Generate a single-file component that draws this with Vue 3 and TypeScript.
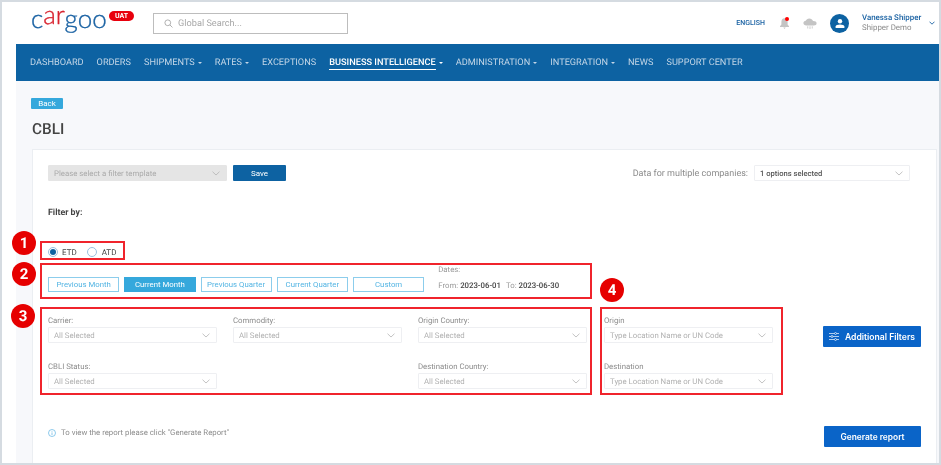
<template>
  <div class="page">
    <header class="topbar">
      <div class="logo-wrap">
        <svg class="logo" width="80" height="40" viewBox="0 0 80 40">
          <text x="0" y="26"><tspan class="logo-blue">c</tspan><tspan class="logo-red" dy="-4">ar</tspan><tspan class="logo-blue" dy="4">goo</tspan></text>
        </svg>
        <span class="uat">UAT</span>
      </div>
      <div class="search">
        <svg width="9" height="9" viewBox="0 0 10 10" fill="none" stroke="#a8a8a8" stroke-width="1">
          <circle cx="4.2" cy="4.2" r="3.2" />
          <path d="M6.6 6.6 9.4 9.4" />
        </svg>
        <span>Global Search...</span>
      </div>
      <div class="top-right">
        <span class="lang">ENGLISH</span>
        <span class="bell">
          <svg width="11" height="12" viewBox="0 0 11 12" fill="#c4c4c4">
            <path d="M5.5 1.2C3.4 1.2 2.4 2.8 2.4 4.8V7.4L1 9.2V10H10V9.2L8.6 7.4V4.8C8.6 2.8 7.6 1.2 5.5 1.2Z" />
            <path d="M4.3 10.6H6.7L5.5 12Z" />
          </svg>
          <i class="bell-dot"></i>
        </span>
        <svg class="cloud" width="14" height="11" viewBox="0 0 14 11" fill="#c4c4c4">
          <path d="M3.4 7.6C1.6 7.6.4 6.5.4 5.1.4 3.8 1.4 2.9 2.7 2.8 3.3 1.3 4.6.4 6.2.4 8 .4 9.5 1.5 10 3.1 12 3 13.6 3.9 13.6 5.3 13.6 6.6 12.5 7.6 10.8 7.6Z" />
          <path d="M4.4 8.2H5.2V10.4H4.4ZM6.6 8.2H7.4V11H6.6ZM8.8 8.2H9.6V10.4H8.8Z" />
        </svg>
        <span class="avatar">
          <svg width="10" height="9" viewBox="0 0 10 9" fill="#fff">
            <circle cx="5" cy="2.2" r="2.2" />
            <path d="M0.6 9V7.6C0.6 6.2 2.6 5.4 5 5.4 7.4 5.4 9.4 6.2 9.4 7.6V9Z" />
          </svg>
        </span>
        <div class="user">
          <div class="user-name">Vanessa Shipper</div>
          <div class="user-role">Shipper Demo</div>
        </div>
        <svg class="user-chev" width="6" height="4" viewBox="0 0 6 4" fill="none" stroke="#1a62a3" stroke-width="0.9">
          <path d="M.5.7 3 3.2 5.5.7" />
        </svg>
      </div>
    </header>

    <div class="body">
      <nav class="nav">
        <span v-for="item in navItems" :key="item.label" class="nav-item" :class="{ active: item.active }">
          <span class="nav-label">{{ item.label }}</span>
          <i v-if="item.caret" class="caret"></i>
        </span>
      </nav>

      <main class="content">
        <button class="back">Back</button>
        <h1 class="title">CBLI</h1>

        <section class="card">
          <div class="template-row">
            <div class="select template">
              <span>Please select a filter template</span>
              <svg class="chev" width="8" height="5" viewBox="0 0 8 5" fill="none" stroke="#b5b5b5" stroke-width="0.8"><path d="M.5.7 4 4 7.5.7" /></svg>
            </div>
            <button class="save">Save</button>
            <label class="companies-label">Data for multiple companies:</label>
            <div class="select companies">
              <span>1 options selected</span>
              <svg class="chev" width="8" height="5" viewBox="0 0 8 5" fill="none" stroke="#b5b5b5" stroke-width="0.8"><path d="M.5.7 4 4 7.5.7" /></svg>
            </div>
          </div>

          <div class="filter-by">Filter by:</div>

          <div class="box radios">
            <span class="radio on"><i></i></span><span class="radio-label">ETD</span>
            <span class="radio"></span><span class="radio-label">ATD</span>
          </div>

          <div class="box periods">
            <button v-for="p in periods" :key="p" class="period" :class="{ current: p === 'Current Month' }">{{ p }}</button>
            <div class="dates">
              <div class="dates-label">Dates:</div>
              <div class="dates-values">
                <span>From: <b>2023-06-01</b></span>
                <span>To: <b>2023-06-30</b></span>
              </div>
            </div>
          </div>

          <div class="filters-row">
            <div class="box grid-main">
              <div v-for="f in mainFilters" :key="f.label" class="field" :style="{ gridColumn: f.col }">
                <label>{{ f.label }}</label>
                <div class="select">
                  <span>All Selected</span>
                  <svg class="chev" width="8" height="5" viewBox="0 0 8 5" fill="none" stroke="#b5b5b5" stroke-width="0.8"><path d="M.5.7 4 4 7.5.7" /></svg>
                </div>
              </div>
            </div>
            <div class="box grid-side">
              <div v-for="f in ['Origin', 'Destination']" :key="f" class="field">
                <label>{{ f }}</label>
                <div class="select">
                  <span>Type Location Name or UN Code</span>
                  <svg class="chev" width="8" height="5" viewBox="0 0 8 5" fill="none" stroke="#b5b5b5" stroke-width="0.8"><path d="M.5.7 4 4 7.5.7" /></svg>
                </div>
              </div>
            </div>
            <button class="primary additional">
              <svg width="10" height="9" viewBox="0 0 10 9" fill="none" stroke="#dbe8f8" stroke-width="0.8">
                <path d="M0 1.5H10M0 4.5H10M0 7.5H10" />
                <circle cx="6.5" cy="1.5" r="1" fill="#0a64c8" />
                <circle cx="3" cy="4.5" r="1" fill="#0a64c8" />
                <circle cx="6.5" cy="7.5" r="1" fill="#0a64c8" />
              </svg>
              Additional Filters
            </button>
          </div>

          <div class="footer-row">
            <svg class="info" width="8" height="8" viewBox="0 0 8 8" fill="none" stroke="#5db3e3" stroke-width="0.7">
              <circle cx="4" cy="4" r="3.5" />
              <path d="M4 3.4V6M4 2V2.7" />
            </svg>
            <span class="hint">To view the report please click "Generate Report"</span>
            <button class="primary generate">Generate report</button>
          </div>

          <span class="marker m1">1</span>
          <span class="marker m2">2</span>
          <span class="marker m3">3</span>
          <span class="marker m4">4</span>
        </section>
      </main>
    </div>
  </div>
</template>

<script setup lang="ts">
interface NavItem {
  label: string
  caret?: boolean
  active?: boolean
}

const navItems: NavItem[] = [
  { label: 'DASHBOARD' },
  { label: 'ORDERS' },
  { label: 'SHIPMENTS', caret: true },
  { label: 'RATES', caret: true },
  { label: 'EXCEPTIONS' },
  { label: 'BUSINESS INTELLIGENCE', caret: true, active: true },
  { label: 'ADMINISTRATION', caret: true },
  { label: 'INTEGRATION', caret: true },
  { label: 'NEWS' },
  { label: 'SUPPORT CENTER' }
]

const periods = ['Previous Month', 'Current Month', 'Previous Quarter', 'Current Quarter', 'Custom']

const mainFilters = [
  { label: 'Carrier:', col: '1' },
  { label: 'Commodity:', col: '2' },
  { label: 'Origin Country:', col: '3' },
  { label: 'CBLI Status:', col: '1' },
  { label: 'Destination Country:', col: '3' }
]
</script>

<style>
html,
body {
  margin: 0;
  background: #fff;
}
</style>

<style scoped>
.page {
  box-sizing: border-box;
  width: 941px;
  height: 465px;
  overflow: hidden;
  display: flex;
  flex-direction: column;
  border: 2px solid #d5dbe1;
  background: #fff;
  font-family: Roboto, "Liberation Sans", sans-serif;
  color: #777;
  text-rendering: geometricPrecision;
  filter: blur(0.4px);
}

/* top bar */
.topbar {
  height: 42px;
  flex: none;
  display: flex;
  align-items: center;
  padding-left: 29px;
}

.logo-wrap {
  width: 122px;
  height: 42px;
  position: relative;
  flex: none;
}

.logo {
  position: absolute;
  left: 0;
  top: 0;
}

.logo text {
  font-family: Lato, sans-serif;
  font-weight: 300;
  font-size: 26px;
  stroke-width: 0.35px;
}

.logo-blue {
  fill: #1a62a3;
  stroke: #1a62a3;
}

.logo-red {
  fill: #d8232f;
  stroke: #d8232f;
}

.uat {
  position: absolute;
  left: 78px;
  top: 9px;
  width: 25px;
  height: 10px;
  border-radius: 5px;
  background: #e8000d;
  color: #fff;
  font-size: 7px;
  font-weight: 700;
  line-height: 10px;
  text-align: center;
}

.search {
  box-sizing: border-box;
  width: 195px;
  height: 21px;
  display: flex;
  align-items: center;
  gap: 5px;
  padding-left: 10px;
  border: 1px solid #bdbdbd;
  color: #a8a8a8;
  font-size: 9.2px;
}

.top-right {
  margin-left: auto;
  display: flex;
  align-items: center;
  padding-right: 4px;
}

.lang {
  color: #1a62a3;
  font-size: 7px;
  font-weight: 500;
  margin-right: 14px;
}

.bell {
  position: relative;
  display: flex;
  margin-right: 13px;
}

.bell-dot {
  position: absolute;
  right: 1px;
  top: 0;
  width: 4px;
  height: 4px;
  border-radius: 50%;
  background: #f00;
}

.cloud {
  margin-right: 13px;
}

.avatar {
  width: 19px;
  height: 19px;
  border-radius: 50%;
  background: #0d62a2;
  display: flex;
  align-items: center;
  justify-content: center;
  margin-right: 13px;
}

.user {
  line-height: 10px;
  font-size: 7.9px;
  width: 67px;
}

.user-name {
  color: #1a62a3;
  font-weight: 500;
}

.user-role {
  color: #8a8a8a;
}

/* nav */
.body {
  flex: 1;
  min-height: 0;
  margin-left: 14px;
  display: flex;
  flex-direction: column;
}

.nav {
  height: 37px;
  flex: none;
  display: flex;
  align-items: center;
  gap: 13px;
  padding-left: 14px;
  background: #0d62a2;
  color: #c3d6e7;
  font-size: 9.2px;
}

.nav-item {
  display: flex;
  align-items: center;
  gap: 3px;
}

.nav-item.active {
  color: #fff;
  font-weight: 500;
}

.nav-item.active .nav-label {
  border-bottom: 1px solid #fff;
  padding-bottom: 1px;
  margin-top: 2px;
}

.caret {
  width: 0;
  height: 0;
  border-left: 2.5px solid transparent;
  border-right: 2.5px solid transparent;
  border-top: 2.5px solid currentColor;
}

/* content */
.content {
  flex: 1;
  min-height: 0;
  display: flex;
  flex-direction: column;
  align-items: flex-start;
  padding: 17px 2px 0 15px;
  background: #f7f8fb;
}

.back {
  width: 32px;
  height: 11px;
  padding: 0;
  border: 0;
  border-radius: 1px;
  background: #35a8dc;
  color: #fff;
  font: 8px/11px Roboto, sans-serif;
}

.title {
  margin: 11px 0 0 1px;
  height: 29px;
  color: #444;
  font-size: 15.3px;
  font-weight: 500;
  line-height: 19px;
}

.card {
  position: relative;
  box-sizing: border-box;
  flex: 1;
  align-self: stretch;
  margin-left: 1px;
  padding: 15px 0 0 7px;
  background: #fff;
  border: 1px solid #ebeef2;
  border-bottom: 0;
}

.template-row {
  display: flex;
  align-items: center;
  padding-left: 8px;
}

.select {
  box-sizing: border-box;
  height: 16px;
  display: flex;
  align-items: center;
  justify-content: space-between;
  padding: 1px 6px 0 5px;
  border: 1px solid #eeeff2;
  border-radius: 1px;
  background: #fff;
  color: #b0b0b0;
  font-size: 7.8px;
}

.template {
  width: 179px;
  background: #e5e5e5;
  border-color: #e5e5e5;
  color: #aaa;
}

.save {
  width: 53px;
  height: 16px;
  margin-left: 6px;
  padding: 0;
  border: 0;
  border-radius: 1px;
  background: #0d62a2;
  color: #fff;
  font: 8px Roboto, sans-serif;
}

.companies-label {
  margin-left: auto;
  margin-right: 6px;
  padding-top: 1px;
  color: #8c8c8c;
  font-size: 9px;
}

.companies {
  width: 156px;
  margin-right: 26px;
  color: #555;
  font-size: 7.6px;
  font-weight: 500;
}

.filter-by {
  margin: 27px 0 0 8px;
  height: 11px;
  color: #444;
  font-size: 8.8px;
  font-weight: 700;
  line-height: 11px;
}

.box {
  box-sizing: border-box;
  border: 2px solid #f0242c;
}

.radios {
  display: inline-flex;
  align-items: center;
  width: 85px;
  height: 19px;
  margin-top: 22px;
  padding: 3px 0 0 6px;
  vertical-align: top;
}

.radio {
  box-sizing: border-box;
  flex: none;
  width: 10px;
  height: 10px;
  display: flex;
  align-items: center;
  justify-content: center;
  border: 1px solid #9cc0de;
  border-radius: 50%;
}

.radio.on i {
  width: 6px;
  height: 6px;
  border-radius: 50%;
  background: #0d62a2;
}

.radio-label {
  flex: none;
  margin: 0 10px 0 4px;
  color: #444;
  font-size: 8px;
}

.radio-label:last-child {
  margin: 0 0 0 5px;
}

.periods {
  display: flex;
  align-items: flex-end;
  gap: 5px;
  width: 552px;
  height: 36px;
  margin-top: 3px;
  padding: 0 0 5px 6px;
}

.period {
  width: 71.25px;
  height: 15px;
  padding: 0;
  border: 1px solid #8ccdec;
  background: #fff;
  color: #52b4e3;
  font: 7.8px Roboto, sans-serif;
}

.period.current {
  border-color: #35a8dc;
  background: #35a8dc;
  color: #fff;
}

.dates {
  margin-left: 9px;
  font-size: 7.8px;
  color: #999;
}

.dates-label {
  margin-bottom: 7px;
}

.dates-values {
  display: flex;
  gap: 5px;
  height: 11px;
}

.dates-values b {
  color: #444;
  font-weight: 500;
}

.filters-row {
  display: flex;
  align-items: flex-start;
  margin-top: 8px;
}

.grid-main {
  display: grid;
  grid-template-columns: repeat(3, 169px);
  align-content: start;
  column-gap: 16px;
  row-gap: 17px;
  width: 552px;
  height: 88px;
  padding: 5px 0 0 6px;
}

.grid-side {
  display: grid;
  row-gap: 17px;
  align-content: start;
  width: 183px;
  height: 88px;
  margin-left: 8px;
  padding: 5px 0 0 2px;
}

.grid-side .select {
  width: 169px;
}

.field label {
  display: block;
  height: 12px;
  margin-bottom: 1px;
  color: #8c8c8c;
  font-size: 7.8px;
  line-height: 14px;
}

.primary {
  height: 21px;
  padding: 0;
  border: 0;
  border-radius: 1px;
  background: #0a64c8;
  color: #fff;
  font: 600 8.6px Inter, Roboto, sans-serif;
}

.additional {
  width: 98px;
  margin: 19px 0 0 40px;
  display: flex;
  align-items: center;
  justify-content: center;
  gap: 6px;
}

.footer-row {
  display: flex;
  align-items: flex-start;
  margin-top: 31px;
  padding-left: 8px;
  height: 21px;
}

.info {
  margin-top: 3px;
}

.hint {
  margin-left: 5px;
  padding-top: 1px;
  color: #8c8c8c;
  font-size: 7.8px;
  line-height: 12px;
}

.generate {
  width: 97px;
  margin-left: auto;
  margin-right: 15px;
  font-size: 8.4px;
}

/* numbered callouts lying over the form */
.marker {
  position: absolute;
  width: 24px;
  height: 24px;
  border-radius: 50%;
  background: #e60000;
  color: #fff;
  font-size: 15px;
  font-weight: 700;
  line-height: 24px;
  text-align: center;
}

.m1 {
  left: -21px;
  top: 81px;
}

.m2 {
  left: -21px;
  top: 112px;
}

.m3 {
  left: -22px;
  top: 154px;
}

.m4 {
  left: 567px;
  top: 128px;
}
</style>
